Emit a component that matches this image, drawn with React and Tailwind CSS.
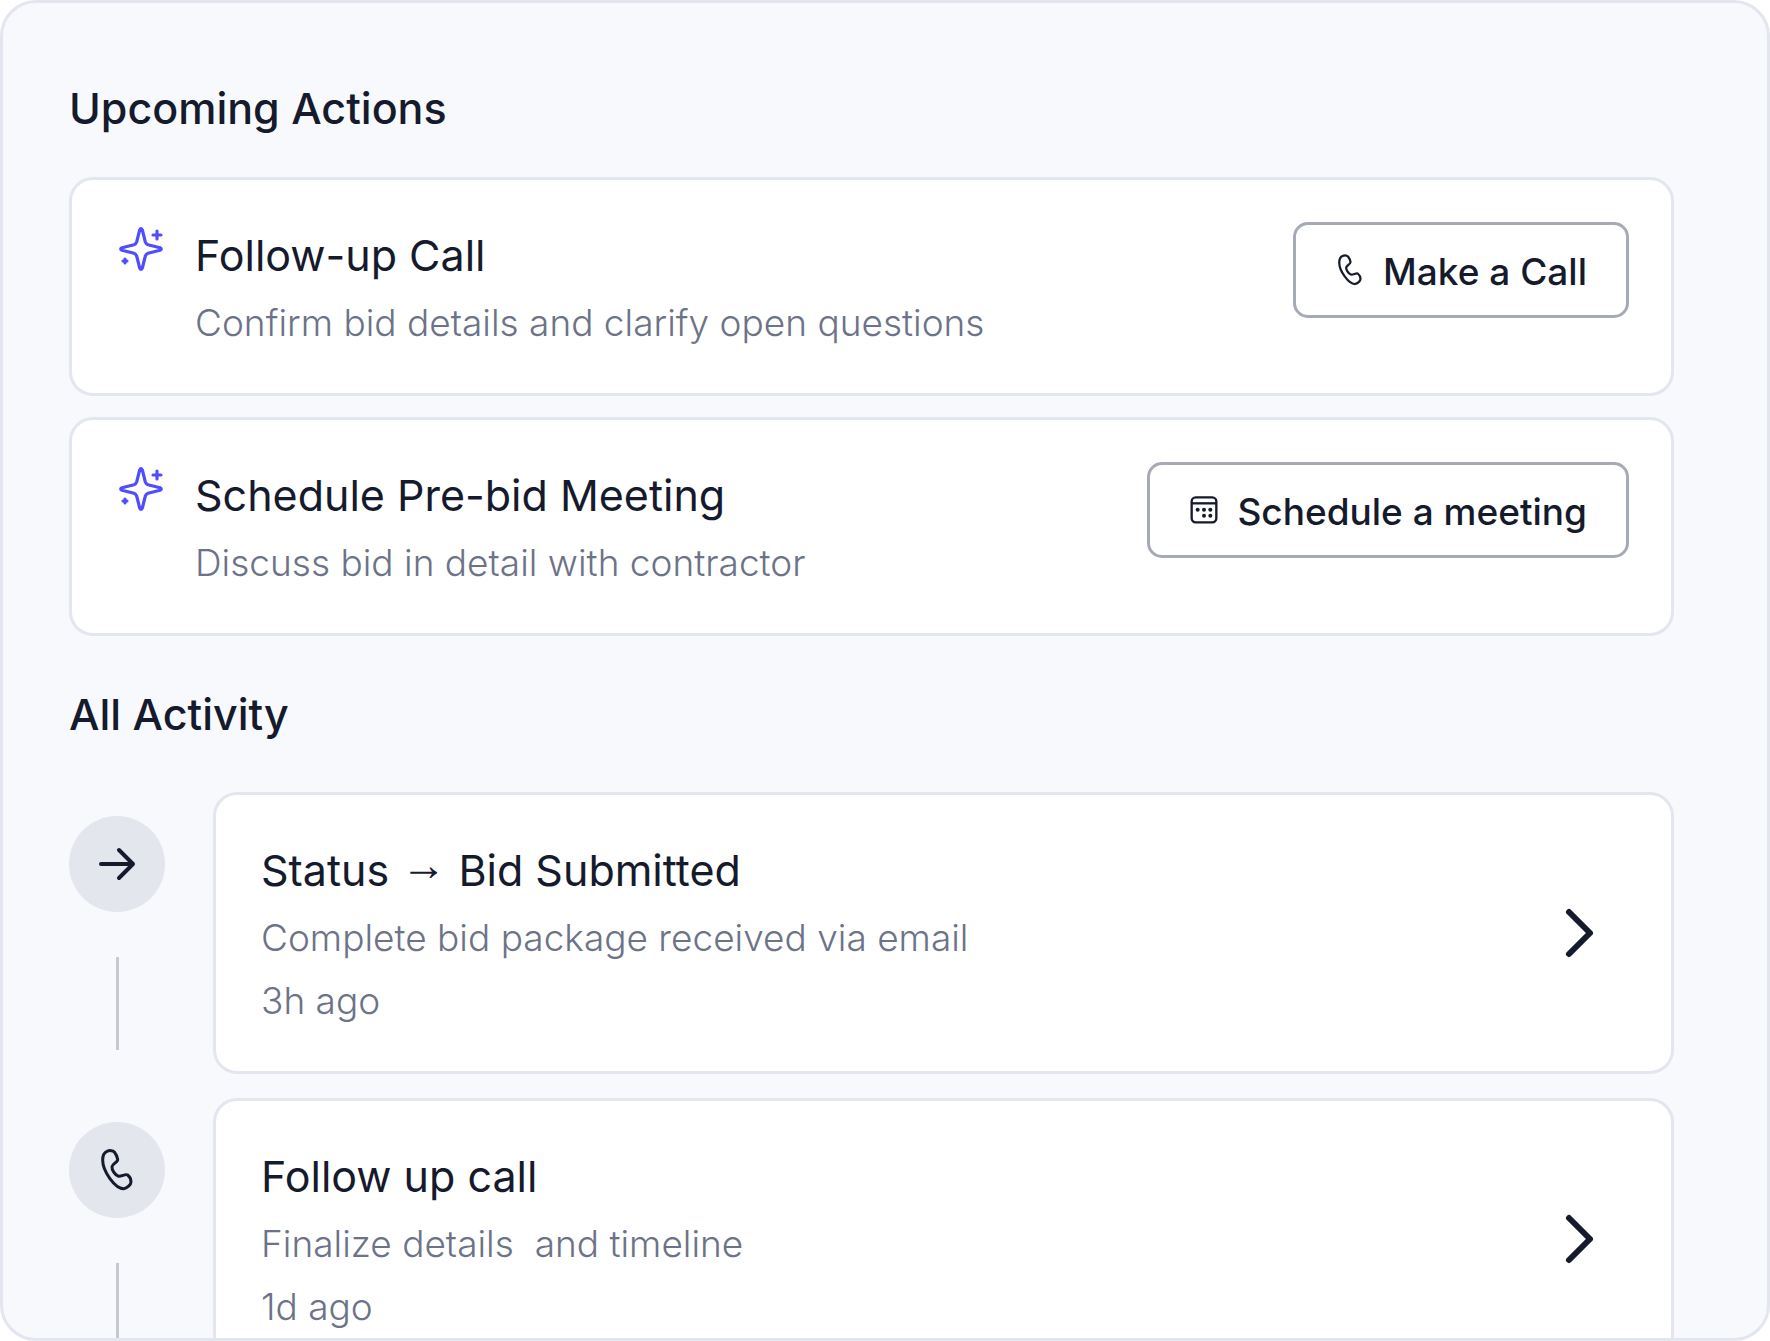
import React from 'react';

const SparkleIcon = () => (
    <svg viewBox="0 0 144 144" className="w-12 h-12 shrink-0 text-[#4f4dff]" fill="none" stroke="currentColor" strokeWidth="9.5" strokeLinecap="round" strokeLinejoin="round" aria-hidden="true">
        <path d="M68 15Q72 7 76 15L85 51Q87 57 93 59L129 68Q137 72 129 76L93 85Q87 87 85 93L76 129Q72 137 68 129L59 93Q57 87 51 85L15 76Q7 72 15 68L51 59Q57 57 59 51Z" />
        <path d="M120 18V42M108 30H132" />
        <path d="M24 102V114M18 108H30" />
    </svg>
);

const PhoneIcon = ({ className }) => (
    <svg viewBox="0 0 144 144" className={className} fill="none" stroke="currentColor" strokeWidth="9" strokeLinejoin="round" aria-hidden="true">
        <path d="M42 16C50 12 60 14 64 18C68 23 73 34 74 40C75 48 58 54 57 62C56 72 66 86 75 90C84 93 98 82 104 87C109 91 114 101 114 108C114 116 102 127 92 128C66 128 29 76 29 42C29 28 33 20 42 16Z" />
    </svg>
);

const CalendarIcon = ({ className }) => (
    <svg viewBox="0 0 108 108" className={className} fill="none" stroke="currentColor" strokeWidth="7" aria-hidden="true">
        <rect x="17" y="16" width="74" height="75" rx="12" />
        <path d="M17 34H91" />
        <g fill="currentColor" stroke="none">
            <circle cx="35" cy="53" r="6" />
            <circle cx="54" cy="53" r="6" />
            <circle cx="73" cy="53" r="6" />
            <circle cx="54" cy="71" r="6" />
            <circle cx="73" cy="71" r="6" />
        </g>
    </svg>
);

const ArrowIcon = ({ className }) => (
    <svg viewBox="0 0 48 48" className={className} fill="none" stroke="currentColor" strokeWidth="4" strokeLinecap="round" strokeLinejoin="round" aria-hidden="true">
        <path d="M8 24H40M26 10L40 24L26 38" />
    </svg>
);

const ChevronIcon = () => (
    <svg viewBox="0 0 72 72" className="w-[72px] h-[72px]" fill="none" stroke="currentColor" strokeWidth="6" strokeLinecap="round" strokeLinejoin="round" aria-hidden="true">
        <path d="M12 15L33 36L12 57" />
    </svg>
);

const actions = [
    { id: 1, title: 'Follow-up Call', text: 'Confirm bid details and clarify open questions', button: 'Make a Call', Icon: PhoneIcon },
    { id: 2, title: 'Schedule Pre-bid Meeting', text: 'Discuss bid in detail with contractor', button: 'Schedule a meeting', Icon: CalendarIcon },
];

const activity = [
    {
        id: 1,
        label: 'Status, Bid Submitted',
        title: <>Status <span className="font-['Liberation_Serif',serif] text-[45px] leading-none align-[6px]">→</span> Bid Submitted</>,
        text: 'Complete bid package received via email',
        time: '3h ago',
        Icon: ArrowIcon,
    },
    { id: 2, label: 'Follow up call', title: 'Follow up call', text: 'Finalize details  and timeline', time: '1d ago', Icon: PhoneIcon },
];

const App = () => {
    return (
        <main className="h-screen overflow-hidden rounded-[36px] border-[3px] border-[#e3e6ee] bg-[#f8f9fd] pt-[75px] pl-[66px] pr-[93px] font-['Inter',sans-serif] text-[#151a2d]">
            <section>
                <h2 className="text-[43px] leading-[60px] font-medium mb-[39px]">Upcoming Actions</h2>
                <ul className="space-y-[21px]">
                    {actions.map(({ id, title, text, button, Icon }) => (
                        <li key={id} className="flex items-start rounded-3xl border-[3px] border-[#e3e6ee] bg-white pt-[42px] pb-[39px] px-[42px]">
                            <div className="pt-[3px] pl-[3px]">
                                <SparkleIcon />
                            </div>
                            <div className="flex-1 pl-[30px]">
                                <h3 className="text-[43px] leading-[66px] mb-[3px]">{title}</h3>
                                <p className="text-[37px] leading-[63px] font-light text-[#6c7388]">{text}</p>
                            </div>
                            <button type="button" className="flex h-24 items-center gap-[15px] rounded-[15px] border-[3px] border-[#a6aab7] pl-9 pr-[39px] text-[37px] font-medium">
                                <Icon className="w-9 h-9" />
                                <span className="pt-[3px]">{button}</span>
                            </button>
                        </li>
                    ))}
                </ul>
            </section>

            <section className="mt-[48px]">
                <h2 className="text-[43px] leading-[60px] font-medium mb-[48px]">All Activity</h2>
                <ul className="space-y-6">
                    {activity.map(({ id, label, title, text, time, Icon }) => (
                        <li key={id} className="flex gap-12">
                            <div className="flex flex-col items-center pt-6 pb-6">
                                <div className="flex h-24 w-24 items-center justify-center rounded-full bg-[#e3e6ed]">
                                    <Icon className="w-12 h-12" />
                                </div>
                                <div className="mt-[45px] w-[3px] flex-1 bg-[#c6c8d2]"></div>
                            </div>
                            <div className="flex flex-1 items-center rounded-3xl border-[3px] border-[#e3e6ee] bg-white py-[39px] pl-[45px] pr-[42px]">
                                <div className="flex-1 pt-[3px]">
                                    <h3 className="text-[43px] leading-[66px] mb-[3px]">{title}</h3>
                                    <p className="text-[37px] leading-[63px] font-light whitespace-pre-wrap text-[#6c7388]">{text}</p>
                                    <p className="text-[37px] leading-[63px] font-light text-[#6c7388]">{time}</p>
                                </div>
                                <button type="button" aria-label={label}>
                                    <ChevronIcon />
                                </button>
                            </div>
                        </li>
                    ))}
                </ul>
            </section>
        </main>
    );
};

export default App;
